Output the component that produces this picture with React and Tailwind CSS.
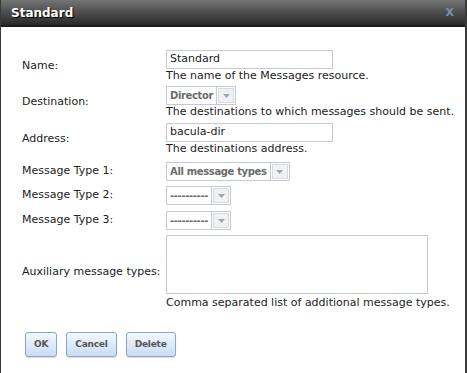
import React from "react";

const font = { fontFamily: '"DejaVu Sans", Verdana, sans-serif' };

function Arrow() {
  return (
    <div className="flex h-full w-[19px] items-center justify-center border-l border-[#c3c9d6] bg-white p-[1px]">
      <div className="flex h-full w-full items-center justify-center border border-[#d5d9e0] bg-[#f1f1f1]">
        <svg width="7" height="4" viewBox="0 0 7 4">
          <path d="M0 0 L7 0 L3.5 4 Z" fill="#9aa7bd" />
        </svg>
      </div>
    </div>
  );
}

function Select({ text }) {
  return (
    <div className="flex h-[19px] w-max items-stretch border border-[#c3c9d6] bg-white">
      <div className="flex items-center pl-[3px] pr-[3px] text-[10px] font-bold tracking-[-0.35px] text-[#6b6b6b]">{text}</div>
      <Arrow />
    </div>
  );
}

function Input({ value }) {
  return (
    <div className="flex h-[19px] w-[167px] items-center border border-[#c3c9d6] bg-white px-[3px] text-[11px] text-[#222]">
      {value}
    </div>
  );
}

function Row({ label, children, className = "" }) {
  return (
    <div className={"flex items-center " + className}>
      <div className="w-[144px] shrink-0 text-[11px] text-[#222]">{label}</div>
      <div className="flex flex-col">{children}</div>
    </div>
  );
}

function Help({ children }) {
  return <div className="text-[11px] leading-[13px] text-[#222]">{children}</div>;
}

function Btn({ children }) {
  return (
    <button className="h-[25px] rounded-[3px] border border-[#86a6cf] bg-gradient-to-b from-[#f3f8fe] to-[#c9dcf3] px-[8px] text-[9px] font-bold tracking-[-0.2px] text-[#555] shadow-[0_1px_1px_rgba(0,0,0,0.15)]">
      {children}
    </button>
  );
}

export default function App() {
  return (
    <div style={font} className="h-[373px] w-[467px] overflow-hidden bg-white">
      <div className="flex h-full flex-col border-l border-r-2 border-[#3a3a3a]">
        <div className="flex h-[27px] shrink-0 items-center justify-between border-b-2 border-[#1e1e1e] bg-gradient-to-b from-[#747474] to-[#2a2a2a] pl-[10px] pr-[11px]">
          <div className="text-[12px] font-bold text-white [text-shadow:1px_1px_1px_#000]">Standard</div>
          <div className="text-[11px] font-bold leading-none text-[#7d8ea3]">X</div>
        </div>
        <div className="flex flex-col pl-[21px] pt-[23px]">
          <Row label="Name:">
            <Input value="Standard" />
            <Help>The name of the Messages resource.</Help>
          </Row>
          <Row label="Destination:" className="mt-[4px]">
            <Select text="Director" />
            <Help>The destinations to which messages should be sent.</Help>
          </Row>
          <Row label="Address:" className="mt-[5px]">
            <Input value="bacula-dir" />
            <Help>The destinations address.</Help>
          </Row>
          <Row label="Message Type 1:" className="mt-[7px]">
            <Select text="All message types" />
          </Row>
          <Row label="Message Type 2:" className="mt-[5px]">
            <Select text="----------" />
          </Row>
          <Row label="Message Type 3:" className="mt-[6px]">
            <Select text="----------" />
          </Row>
          <Row label="Auxiliary message types:" className="mt-[5px]">
            <div className="h-[59px] w-[262px] border border-[#c3c9d6] bg-white" />
            <Help>
              <span className="mt-[2px] block">Comma separated list of additional message types.</span>
            </Help>
          </Row>
          <div className="mt-[23px] flex gap-[9px] pl-[3px]">
            <Btn>OK</Btn>
            <Btn>Cancel</Btn>
            <Btn>Delete</Btn>
          </div>
        </div>
      </div>
    </div>
  );
}
